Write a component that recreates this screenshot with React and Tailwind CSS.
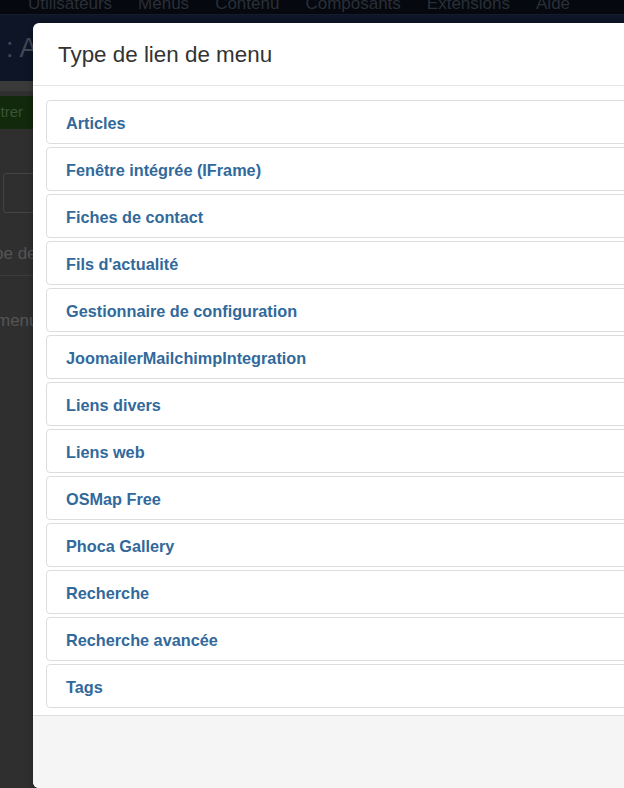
const items = [
  "Articles",
  "Fenêtre intégrée (IFrame)",
  "Fiches de contact",
  "Fils d'actualité",
  "Gestionnaire de configuration",
  "JoomailerMailchimpIntegration",
  "Liens divers",
  "Liens web",
  "OSMap Free",
  "Phoca Gallery",
  "Recherche",
  "Recherche avancée",
  "Tags",
];

// ── dimmed admin page behind the modal ───────────────────────────────────────
function Backdrop() {
  return (
    <div className="absolute inset-0 bg-[#2f2f2f] overflow-hidden">
      <div className="h-[15px] bg-[#05080f] border-b border-[#141c2e] overflow-hidden whitespace-nowrap text-[17px] leading-[8px] text-[#2a2f38] pl-[28px]">
        <span className="mr-[26px]">Utilisateurs</span>
        <span className="mr-[26px]">Menus</span>
        <span className="mr-[26px]">Contenu</span>
        <span className="mr-[26px]">Composants</span>
        <span className="mr-[26px]">Extensions</span>
        <span>Aide</span>
      </div>
      <div className="h-[66px] bg-[#0d1526] flex items-center pl-[6px] text-[27px] text-[#414856]">: A</div>
      <div className="h-[10px] bg-[#3a3a3a]" />
      <div className="mt-[5px] w-[40px] h-[33px] bg-[#12290c] text-[#3a5433] text-[15px] flex items-center justify-end pr-[17px]">trer</div>
      <div className="mt-[44px] ml-[3px] w-[60px] h-[40px] border border-[#444] rounded-[3px]" />
      <div className="mt-[28px] text-[#555] text-[17px] ml-[-6px]">pe de</div>
      <div className="mt-[8px] h-px bg-[#3b3b3b]" />
      <div className="mt-[32px] text-[#555] text-[17px] ml-[-4px]">menu</div>
    </div>
  );
}

export default function App() {
  return (
    <div className="relative w-[624px] h-[788px] overflow-hidden font-['Liberation_Sans',Arial,sans-serif]">
      <Backdrop />
      <div className="absolute left-[33px] top-[23px] w-[640px] h-[765px] bg-white rounded-[6px] shadow-[0_3px_7px_rgba(0,0,0,0.3)] flex flex-col overflow-hidden">
        {/* header */}
        <div className="h-[63px] border-b border-[#e5e5e5] flex items-center pl-[25px] pt-[1px]">
          <h3 className="text-[22.4px] text-[#333] font-normal">Type de lien de menu</h3>
        </div>
        {/* list */}
        <div className="pt-[14px] pl-[13px] pb-[4px]">
          {items.map((t) => (
            <div
              key={t}
              className="h-[44px] mb-[3px] border border-[#ddd] rounded-[4px] flex items-center pl-[19px] pt-[3px] text-[16.25px] font-bold text-[#31699b]"
            >
              {t}
            </div>
          ))}
        </div>
        {/* footer */}
        <div className="flex-1 bg-[#f5f5f5] border-t border-[#ddd]" />
      </div>
    </div>
  );
}
